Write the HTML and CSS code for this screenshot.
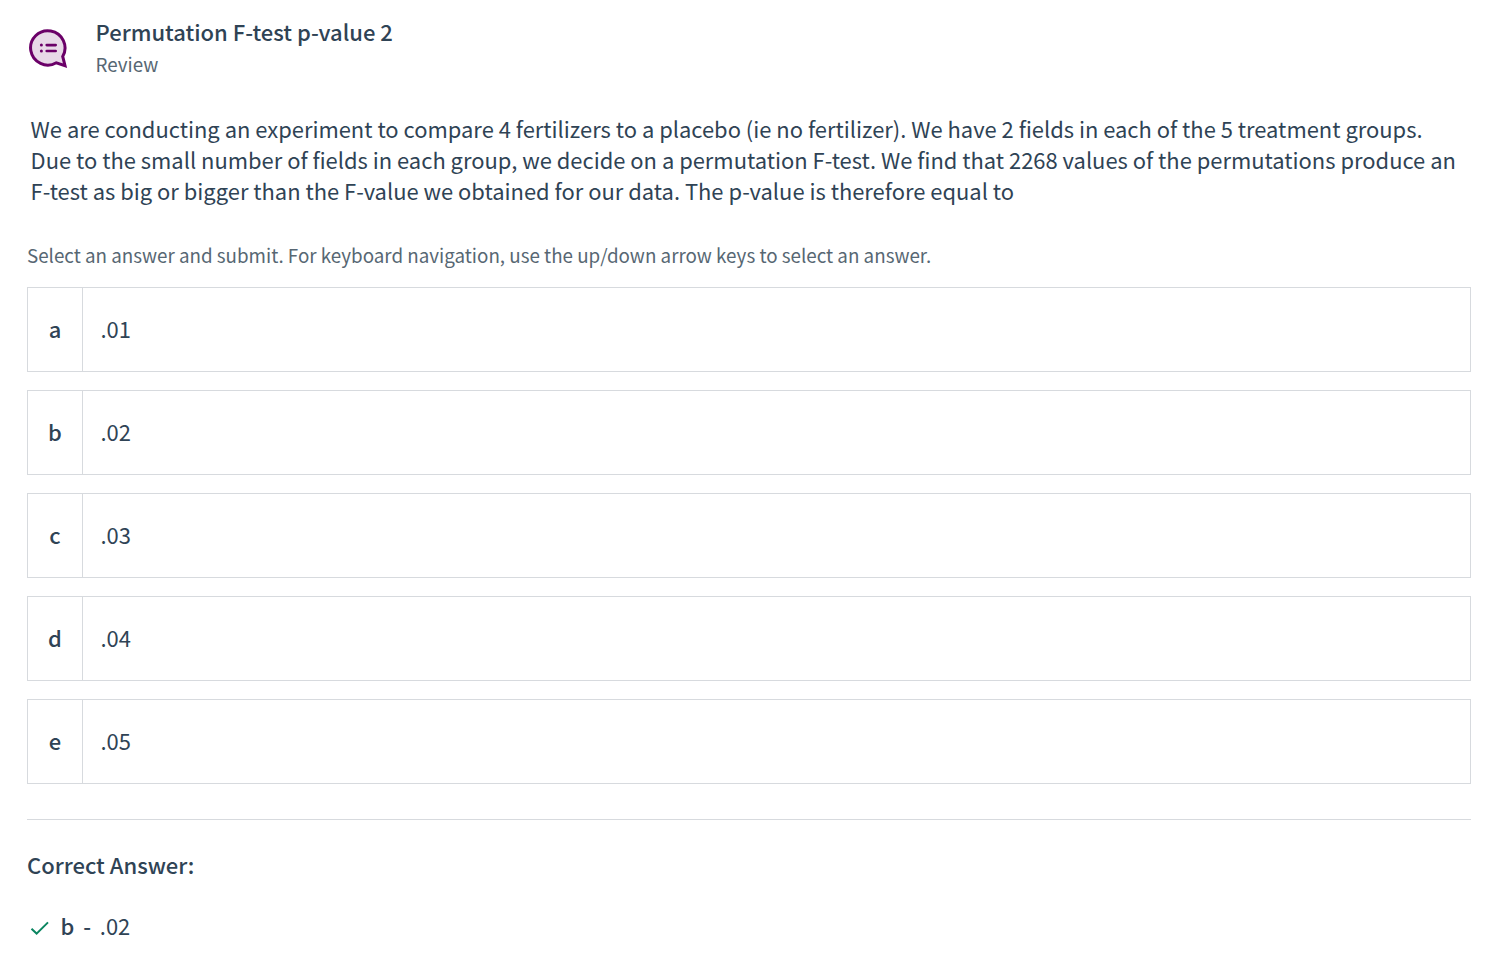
FILE: index.html
```html
<!DOCTYPE html>
<html lang="en">
<head>
<meta charset="utf-8">
<title>Permutation F-test p-value 2</title>
<link rel="stylesheet" href="styles.css">
</head>
<body>
<main class="page">
  <header class="header">
    <svg class="header-icon" viewBox="0 0 40 40" width="40" height="40" aria-hidden="true">
      <path d="M37 37.7 L34.7 28.45 A17.2 17.2 0 1 0 28.35 34.8 Z" fill="#e8d9e8" stroke="#6b0068" stroke-width="3"/>
      <path d="M18.7 17.1H27.7M18.7 23H27.7" stroke="#6b0068" stroke-width="2.6" stroke-linecap="round"/>
      <circle cx="13.4" cy="17.1" r="1.5" fill="#6b0068"/>
      <circle cx="13.4" cy="23" r="1.5" fill="#6b0068"/>
    </svg>
    <div class="heading">
      <h1 class="title">Permutation F-test p-value 2</h1>
      <p class="subtitle">Review</p>
    </div>
  </header>
  <div class="question">
    <p class="line">We are conducting an experiment to compare 4 fertilizers to a placebo (ie no fertilizer). We have 2 fields in each of the 5 treatment groups.</p>
    <p class="line">Due to the small number of fields in each group, we decide on a permutation F-test. We find that 2268 values of the permutations produce an</p>
    <p class="line">F-test as big or bigger than the F-value we obtained for our data. The p-value is therefore equal to</p>
  </div>
  <p class="hint">Select an answer and submit. For keyboard navigation, use the up/down arrow keys to select an answer.</p>
  <ul class="answers">
    <li class="answer"><span class="letter">a</span><span class="value">.01</span></li>
    <li class="answer"><span class="letter">b</span><span class="value">.02</span></li>
    <li class="answer"><span class="letter">c</span><span class="value">.03</span></li>
    <li class="answer"><span class="letter">d</span><span class="value">.04</span></li>
    <li class="answer"><span class="letter">e</span><span class="value">.05</span></li>
  </ul>
  <section class="result">
    <h2 class="result-title">Correct Answer:</h2>
    <div class="result-row">
      <svg class="check" viewBox="0 0 20 16" width="20" height="16" aria-hidden="true"><path d="M1.5 8.8 L6.6 13.6 L18 2.4" fill="none" stroke="#0a8560" stroke-width="2"/></svg>
      <span class="result-letter">b</span><span class="result-dash">-</span><span class="result-value">.02</span>
    </div>
  </section>
</main>
</body>
</html>
```
FILE: styles.css
```css
* { box-sizing: border-box; }
body {
  margin: 0;
  background: #fff;
  color: #2f4355;
  font-family: "Noto Sans CJK SC", "Noto Sans CJK JP", sans-serif;
  font-size: 21.93px;
}
h1, h2, p, ul { margin: 0; padding: 0; }
.page { padding: 15px 31px 0 27px; }
.header { display: flex; height: 65px; }
.header-icon { margin: 13px 27.5px 0 1px; }
.title { font-size: 22px; line-height: 32px; font-weight: 500; }
.subtitle { font-size: 18.8px; line-height: 34px; color: #576773; }
.question { margin-top: 33px; padding-left: 3.6px; }
.line { line-height: 31px; white-space: nowrap; }
.hint { margin-top: 34px; font-size: 18.8px; line-height: 30px; color: #576773; white-space: nowrap; }
.answers { margin-top: 17px; list-style: none; display: grid; gap: 18px; }
.answer { display: flex; height: 85px; border: 1px solid #d7dade; line-height: 81px; }
.letter { width: 55px; border-right: 1px solid #d7dade; text-align: center; font-weight: 500; }
.value { padding-left: 17.5px; }
.result { margin-top: 35px; border-top: 1px solid #d7dade; padding-top: 28px; }
.result-title { font-size: 22px; line-height: 32px; font-weight: 500; }
.result-row { display: flex; align-items: center; margin-top: 30px; line-height: 32px; padding-left: 3px; }
.check { margin-top: 4px; }
.result-letter { margin-left: 10.5px; font-weight: 500; }
.result-dash { margin-left: 9px; font-weight: 500; }
.result-value { margin-left: 8.7px; }
```
